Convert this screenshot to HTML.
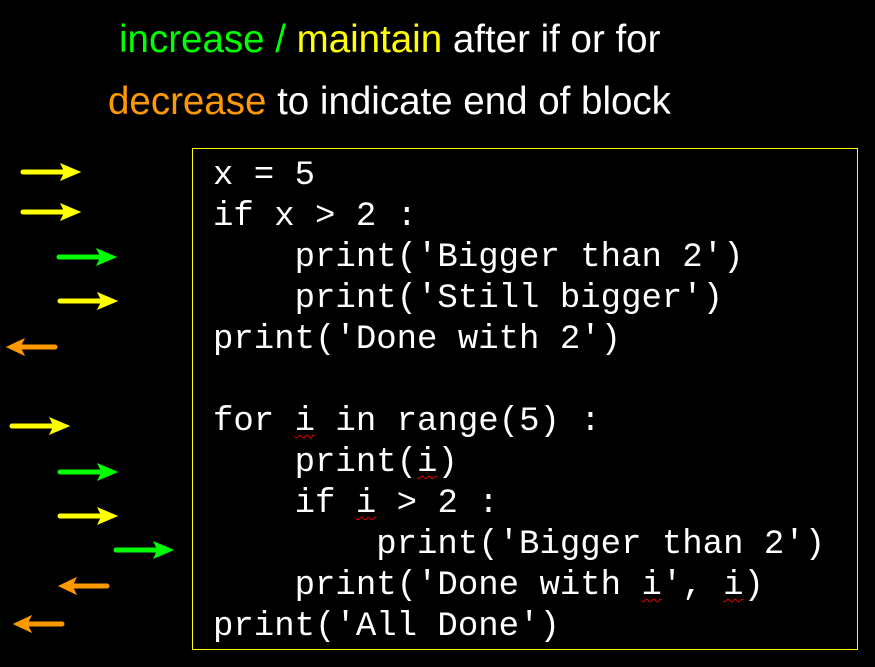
<!DOCTYPE html>
<html><head><meta charset="utf-8"><style>
html,body{margin:0;padding:0;background:#000;width:875px;height:667px;overflow:hidden;position:relative}
.h{position:absolute;font-family:"Liberation Sans",Arial,sans-serif;font-size:38.5px;color:#fff;white-space:nowrap;line-height:1}
.g{color:#00ff00}.y{color:#ffff00}.o{color:#ff9900}
.box{position:absolute;left:192px;top:148px;width:666px;height:502px;border:1px solid #ffff00;box-sizing:border-box}
pre{position:absolute;left:213px;top:156px;margin:0;font-family:"Liberation Mono","Courier New",monospace;font-size:34px;line-height:41px;color:#fff}
.w{text-decoration:underline wavy #e00;text-decoration-thickness:1px;text-underline-offset:4px}
svg{position:absolute;left:0;top:0}
</style></head><body>
<div class="h" style="left:119px;top:21px"><span class="g">increase / </span><span class="y">maintain</span> after if or for</div>
<div class="h" style="left:108px;top:83px"><span class="o">decrease</span> to indicate end of block</div>
<div class="box"></div>
<pre>x = 5
if x &gt; 2 :
    print('Bigger than 2')
    print('Still bigger')
print('Done with 2')

for <span class="w">i</span> in range(5) :
    print(<span class="w">i</span>)
    if <span class="w">i</span> &gt; 2 :
        print('Bigger than 2')
    print('Done with <span class="w">i</span>', <span class="w">i</span>)
print('All Done')</pre>
<svg width="875" height="667">
<defs>
<g id="ar"><line x1="0" y1="0" x2="42" y2="0" stroke-width="5" stroke-linecap="round"/><polygon points="38,-8 57,0 38,8 42,0"/></g>
<g id="al"><line x1="6" y1="0" x2="41" y2="0" stroke-width="5" stroke-linecap="round"/><polygon points="10,-8 -7,0 10,8 6,0"/></g>
</defs>
<g fill="#ffff00" stroke="#ffff00"><use href="#ar" x="23" y="172"/><use href="#ar" x="23" y="212"/><use href="#ar" x="60" y="301"/><use href="#ar" x="12" y="426"/><use href="#ar" x="60" y="516"/></g>
<g fill="#00ff00" stroke="#00ff00"><use href="#ar" x="59" y="257"/><use href="#ar" x="60" y="472"/><use href="#ar" x="116" y="550"/></g>
<g fill="#ff9900" stroke="#ff9900"><use href="#al" x="14" y="347"/><use href="#al" x="66" y="586"/><use href="#al" x="21" y="624"/></g>
</svg>
</body></html>
